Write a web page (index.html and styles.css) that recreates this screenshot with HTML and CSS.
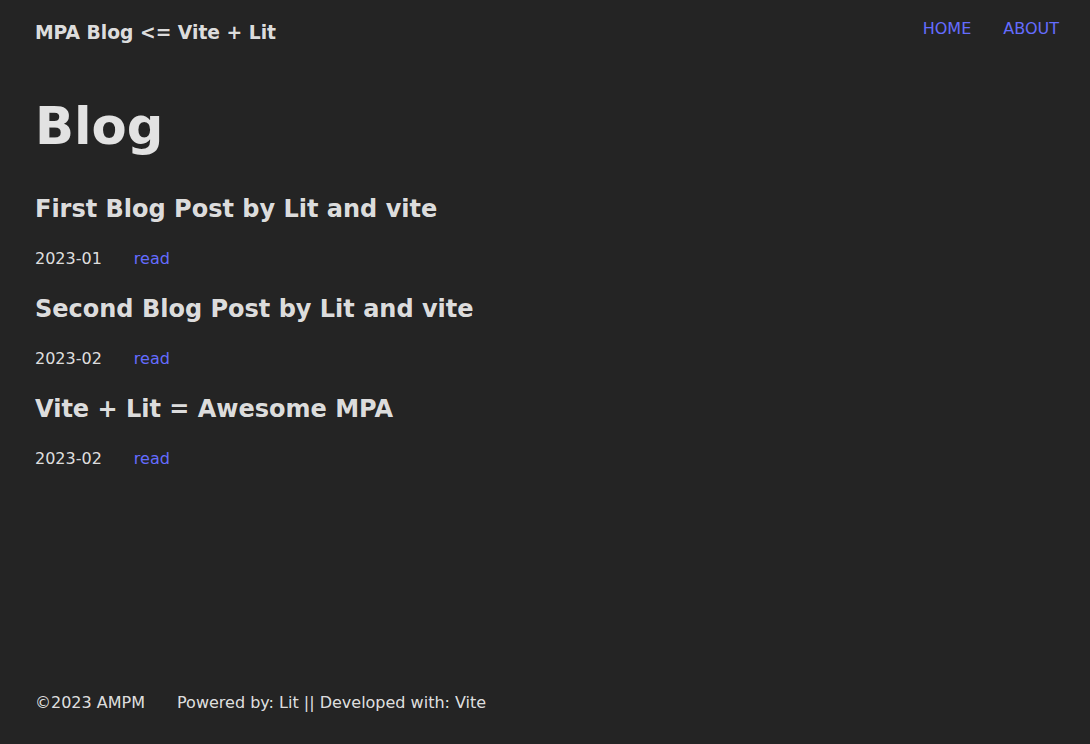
FILE: index.html
```html
<!DOCTYPE html>
<html lang="en">
<head>
<meta charset="utf-8">
<title>MPA Blog</title>
<link rel="stylesheet" href="styles.css">
</head>
<body>
<div class="page">
  <header class="site-header">
    <div class="brand">MPA Blog &lt;= Vite + Lit</div>
    <nav class="nav">
      <a href="#">HOME</a>
      <a href="#">ABOUT</a>
    </nav>
  </header>
  <main class="content">
    <h1>Blog</h1>
    <article class="post">
      <h2>First Blog Post by Lit and vite</h2>
      <p class="meta"><span>2023-01</span><a href="#">read</a></p>
    </article>
    <article class="post">
      <h2>Second Blog Post by Lit and vite</h2>
      <p class="meta"><span>2023-02</span><a href="#">read</a></p>
    </article>
    <article class="post">
      <h2>Vite + Lit = Awesome MPA</h2>
      <p class="meta"><span>2023-02</span><a href="#">read</a></p>
    </article>
  </main>
  <footer class="site-footer">
    <span>©2023 AMPM</span>
    <span>Powered by: Lit || Developed with: Vite</span>
  </footer>
</div>
</body>
</html>
```
FILE: styles.css
```css
html, body {
  margin: 0;
  padding: 0;
}
body {
  background: #242424;
  color: rgba(255, 255, 255, 0.87);
  font-family: "DejaVu Sans", sans-serif;
  font-size: 16px;
  line-height: 1.5;
}
a {
  color: #646cff;
  text-decoration: none;
}
.page {
  min-height: 744px;
  display: flex;
  flex-direction: column;
  padding: 0 31px 0 35px;
  box-sizing: border-box;
}
.site-header {
  display: flex;
  justify-content: space-between;
  align-items: flex-start;
  padding-top: 17px;
}
.brand {
  font-size: 18.72px;
  font-weight: bold;
  line-height: 1.5;
  margin-top: 2px;
}
.nav {
  display: flex;
  gap: 32px;
}
.content {
  flex: 1;
  padding-top: 51px;
}
h1 {
  font-size: 51.2px;
  line-height: 1.1;
  margin: 0 0 37px;
}
h2 {
  font-size: 24px;
  margin: 0.83em 0;
}
.meta {
  margin: 16px 0;
  display: flex;
  gap: 32px;
}
.site-footer {
  display: flex;
  gap: 32px;
  padding-bottom: 29px;
}
```
